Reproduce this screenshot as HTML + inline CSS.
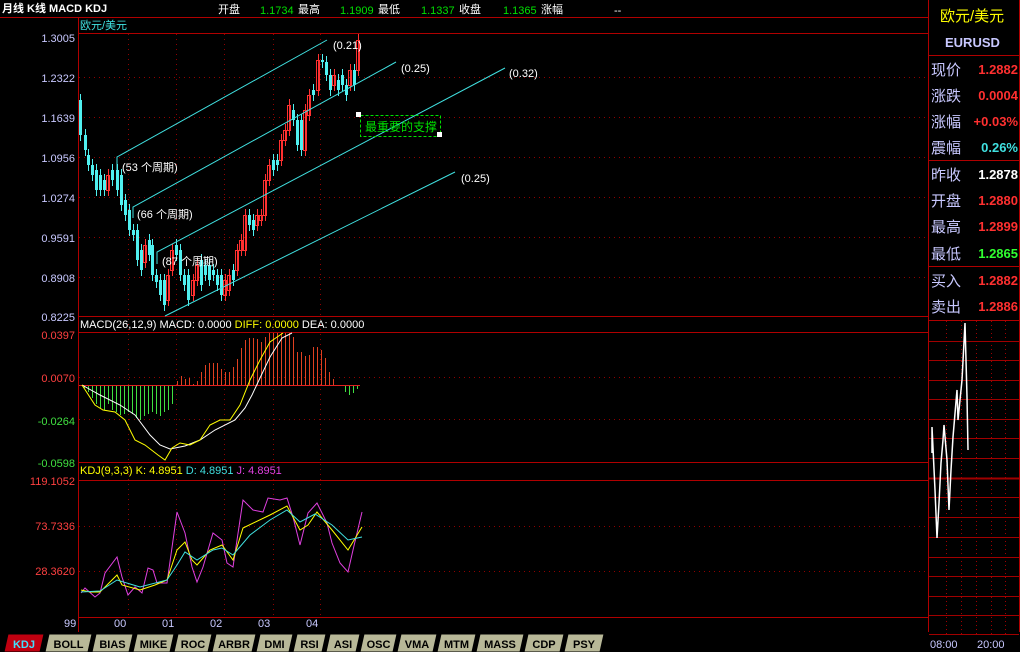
<!DOCTYPE html>
<html><head><meta charset="utf-8"><style>
body{margin:0;background:#000;width:1020px;height:652px;overflow:hidden;font-family:"Liberation Sans","Noto Sans CJK SC",sans-serif}
svg{position:absolute;left:0;top:0}
text{font-family:"Liberation Sans","Noto Sans CJK SC",sans-serif}
</style></head><body>
<svg id="s" width="1020" height="652" xmlns="http://www.w3.org/2000/svg">
<g stroke="#b00000" stroke-width="1" fill="none">
<line x1="0" y1="17.5" x2="928" y2="17.5"/>
<line x1="78.5" y1="17" x2="78.5" y2="632"/>
<line x1="78" y1="33.5" x2="928" y2="33.5"/>
<line x1="78" y1="316.5" x2="928" y2="316.5"/>
<line x1="78" y1="332.5" x2="928" y2="332.5"/>
<line x1="78" y1="462.5" x2="928" y2="462.5"/>
<line x1="78" y1="480.5" x2="928" y2="480.5"/>
<line x1="78" y1="617.5" x2="928" y2="617.5"/>
<line x1="928.5" y1="0" x2="928.5" y2="632"/>
<line x1="929" y1="55.5" x2="1020" y2="55.5"/>
<line x1="929" y1="160.5" x2="1020" y2="160.5"/>
<line x1="929" y1="266.5" x2="1020" y2="266.5"/>
<line x1="929" y1="320.5" x2="1020" y2="320.5"/>
<line x1="1019.5" y1="0" x2="1019.5" y2="632"/>
</g>
<g id="grid" stroke="#900000" stroke-dasharray="1,4"></g>
<g id="mini"></g>
<g id="candles"></g>
<g id="bars"></g>
<g stroke="#40e0e0" stroke-width="1" fill="none">
<polyline points="117,170 117,157 327,40"/>
<polyline points="133,218 133,207 396,62"/>
<polyline points="157,264 157,252 505,68"/>
<line x1="165" y1="316" x2="455" y2="172"/>
</g>
<g fill="#fff" font-size="11">
<text x="333" y="49">(0.21)</text><text x="401" y="72">(0.25)</text>
<text x="509" y="77">(0.32)</text><text x="461" y="182">(0.25)</text>
<text x="122" y="171">(53 个周期)</text><text x="137" y="218">(66 个周期)</text>
<text x="162" y="265">(87 个周期)</text>
</g>
<rect x="360.5" y="115.5" width="80" height="21" fill="none" stroke="#00e000" stroke-dasharray="3,2"/>
<text x="365" y="131" fill="#00e000" font-size="12">最重要的支撑</text>
<rect x="356" y="112" width="5" height="5" fill="#fff"/><rect x="437" y="132" width="5" height="5" fill="#fff"/>
<g fill="none" stroke-width="1">
<polyline stroke="#fff" points="82,385 100,395 120,405 135,415 150,435 160,445 170,449 185,446 200,440 215,430 235,420 245,408 252,395 260,378 270,357 282,338 292,333"/>
<polyline stroke="#ffff00" points="82,385 95,405 103,410 115,412 125,420 135,440 145,445 158,455 165,460 172,448 180,443 190,445 200,440 210,425 220,420 230,420 240,405 250,380 260,360 270,342 283,333"/>
<polyline stroke="#e040e0" points="81,593 85,588 95,597 100,593 105,573 117,557 122,577 128,595 135,587 142,593 148,568 153,570 157,583 167,583 177,512 185,533 192,567 197,582 203,567 213,533 222,540 227,563 233,567 243,500 253,510 263,512 268,498 280,500 287,498 293,517 300,545 308,513 317,503 327,523 332,543 340,563 348,572 353,550 362,512"/>
<polyline stroke="#ffff00" points="81,590 90,592 100,592 117,575 122,585 140,590 155,585 167,580 177,550 185,542 192,560 197,565 210,550 222,545 233,560 243,528 270,515 287,506 300,530 308,525 317,512 332,530 348,550 362,527"/>
<polyline stroke="#40e0e0" points="81,592 100,591 117,580 140,587 167,580 177,565 185,552 197,560 213,550 222,548 233,555 250,535 270,520 287,510 300,522 315,514 332,525 348,540 362,537"/>
<polyline stroke="#fff" stroke-width="1.5" points="932,453 932,427 935,490 937,538 939,503 941,463 943,440 944,425 947,460 949,510 951,470 953,437 957,390 958,420 962,380 965,323 967,397 968,450"/>
</g>
<g font-size="11">
<text x="2" y="12" fill="#fff" font-weight="bold" font-family="Liberation Serif,Noto Serif CJK SC,serif">月线 K线 MACD KDJ</text>
<text x="218" y="13" fill="#fff">开盘</text><text x="260" y="14" fill="#00e000">1.1734</text>
<text x="298" y="13" fill="#fff">最高</text><text x="340" y="14" fill="#00e000">1.1909</text>
<text x="378" y="13" fill="#fff">最低</text><text x="421" y="14" fill="#00e000">1.1337</text>
<text x="459" y="13" fill="#fff">收盘</text><text x="503" y="14" fill="#00e000">1.1365</text>
<text x="541" y="13" fill="#fff">涨幅</text><text x="614" y="14" fill="#fff">--</text>
<text x="80" y="29" fill="#40e0e0">欧元/美元</text>
<text x="80" y="328" fill="#fff">MACD(26,12,9) MACD: 0.0000 <tspan fill="#ffff00">DIFF: 0.0000</tspan> DEA: 0.0000</text>
<text x="80" y="474" fill="#ffff00">KDJ(9,3,3) K: 4.8951 <tspan fill="#40e0e0">D: 4.8951</tspan> <tspan fill="#e040e0">J: 4.8951</tspan></text>
</g>
<g font-size="11" text-anchor="end" fill="#c8c8ff">
<text x="75" y="42">1.3005</text><text x="75" y="82">1.2322</text><text x="75" y="122">1.1639</text>
<text x="75" y="162">1.0956</text><text x="75" y="202">1.0274</text><text x="75" y="242">0.9591</text>
<text x="75" y="282">0.8908</text><text x="75" y="321">0.8225</text>
<text x="75" y="339" fill="#ff4040">0.0397</text><text x="75" y="382" fill="#ff4040">0.0070</text>
<text x="75" y="425" fill="#40e040">-0.0264</text><text x="75" y="467" fill="#40e040">-0.0598</text>
<text x="75" y="485" fill="#ff4040">119.1052</text><text x="75" y="530" fill="#ff4040">73.7336</text><text x="75" y="575" fill="#ff4040">28.3620</text>
</g>
<g font-size="11" fill="#c8c8ff">
<text x="64" y="627">99</text><text x="114" y="627">00</text><text x="162" y="627">01</text>
<text x="210" y="627">02</text><text x="258" y="627">03</text><text x="306" y="627">04</text>
<text x="930" y="648">08:00</text><text x="977" y="648">20:00</text>
</g>
<g font-size="15" fill="#c8c8ff">
<text x="940" y="21" fill="#ffff00">欧元/美元</text>
<text x="945" y="47" font-size="13" font-weight="bold">EURUSD</text>
<text x="931" y="75">现价</text><text x="931" y="101">涨跌</text><text x="931" y="127">涨幅</text><text x="931" y="153">震幅</text>
<text x="931" y="180">昨收</text><text x="931" y="206">开盘</text><text x="931" y="232">最高</text><text x="931" y="259">最低</text>
<text x="931" y="286">买入</text><text x="931" y="312">卖出</text>
</g>
<g font-size="13" font-weight="bold" text-anchor="end" font-family="DejaVu Sans,sans-serif">
<text x="1018" y="74" fill="#ff3030">1.2882</text><text x="1018" y="100" fill="#ff3030">0.0004</text>
<text x="1018" y="126" fill="#ff3030">+0.03%</text><text x="1018" y="152" fill="#40e0e0">0.26%</text>
<text x="1018" y="179" fill="#fff">1.2878</text><text x="1018" y="205" fill="#ff3030">1.2880</text>
<text x="1018" y="231" fill="#ff3030">1.2899</text><text x="1018" y="258" fill="#30ff30">1.2865</text>
<text x="1018" y="285" fill="#ff3030">1.2882</text><text x="1018" y="311" fill="#ff3030">1.2886</text>
</g>
<g id="tabs" font-size="11" font-weight="bold" text-anchor="middle"></g>
</svg>
<script>
var NS="http://www.w3.org/2000/svg";
function el(p,t,a){var e=document.createElementNS(NS,t);for(var k in a)e.setAttribute(k,a[k]);document.getElementById(p).appendChild(e);return e;}
[128,176,224,273,320].forEach(function(x){el('grid','line',{x1:x+.5,y1:34,x2:x+.5,y2:617});});
[77,117,157,197,237,277,377,419,526,571].forEach(function(y){el('grid','line',{x1:79,y1:y+.5,x2:928,y2:y+.5});});
[341,360,380,399,419,438,458,478,497,517,537,557,576,596,615,634].forEach(function(y){el('mini','line',{x1:929,y1:y+.5,x2:1019,y2:y+.5,stroke:'#a00000','stroke-width':y==478?2:1});});
[946,961,976,991,1005].forEach(function(x){el('mini','line',{x1:x+.5,y1:321,x2:x+.5,y2:634,stroke:'#a00000','stroke-dasharray':'1,3'});});
var C=[[80,100,135],[85,135,150],[88,155,165],[92,165,175],[96,170,190],[100,175,190],[104,180,190],[108,190,175],[112,170,180],[117,170,190],[121,175,205],[125,200,215],[129,210,230],[133,230,235],[137,230,260],[141,250,270],[145,262,245],[149,240,255],[152,245,275],[156,275,282],[160,280,295],[164,280,305],[168,300,275],[172,270,250],[176,245,255],[180,250,275],[184,275,285],[188,275,300],[193,295,280],[197,280,265],[201,260,285],[205,265,275],[209,265,280],[213,270,275],[217,275,285],[221,275,295],[225,295,280],[229,290,275],[233,270,280],[237,270,250],[241,250,240],[245,250,215],[249,215,225],[253,220,230],[257,225,215],[261,220,215],[265,215,180],[269,180,165],[273,160,170],[277,160,165],[281,160,140],[285,140,130],[289,130,105],[293,110,120],[297,120,145],[301,120,150],[305,150,110],[309,115,95],[313,90,95],[318,90,60],[322,60,62],[326,62,75],[330,75,90],[334,85,75],[338,80,90],[342,75,85],[346,85,95],[350,85,70],[354,70,85],[358,70,40]];
C.forEach(function(c){var up=c[2]<c[1];var col=up?'#ff3030':'#50f0f0';var t=Math.min(c[1],c[2]),b=Math.max(c[1],c[2]);
el('candles','rect',{x:c[0],y:t-6,width:1,height:b-t+12,fill:col});
if(up)el('candles','rect',{x:c[0]-1.5,y:t+.5,width:3,height:Math.max(b-t,1),fill:'none',stroke:col});
else el('candles','rect',{x:c[0]-1,y:t,width:3,height:Math.max(b-t,1),fill:col});});
var R=[381,376,379,378,384,381,372,365,363,363,363,369,372,372,367,359,348,340,338,338,339,342,337,333,333,333,333,333,333,337,352,352,356,355,347,347,350,358,372,379];
R.forEach(function(y,i){var x=177+i*4;el('bars','rect',{x:x,y:y,width:1,height:385-y,fill:'#e04020'});});
var G=[388,392,398,404,408,410,404,410,412,415,414,412,414,418,420,416,414,412,414,416,412,410,404];
G.forEach(function(y,i){var x=84+i*4;el('bars','rect',{x:x,y:385,width:1,height:y-385,fill:'#40e040'});});
[392,395,393,389].forEach(function(y,i){var x=345+i*4;el('bars','rect',{x:x,y:385,width:1,height:y-385,fill:'#40e040'});});
el('bars','rect',{x:79,y:385,width:281,height:1,fill:'#e02020'});
var T=[['KDJ',4,44],['BOLL',45,92],['BIAS',92,133],['MIKE',133,174],['ROC',174,212],['ARBR',212,256],['DMI',256,293],['RSI',293,326],['ASI',326,360],['OSC',360,397],['VMA',397,437],['MTM',437,476],['MASS',476,524],['CDP',524,564],['PSY',564,604]];
T.forEach(function(t,i){var a=t[1],b=t[2];var f=i==0?'#c00010':'#b8b898';
el('tabs','polygon',{points:(a+4)+',634 '+(b)+',634 '+(b-4)+',652 '+(a)+',652',fill:f,stroke:'#000'});
var tx=el('tabs','text',{x:(a+b)/2,y:648,fill:i==0?'#40e0ff':'#000'});tx.textContent=t[0];});
</script>
</body></html>
